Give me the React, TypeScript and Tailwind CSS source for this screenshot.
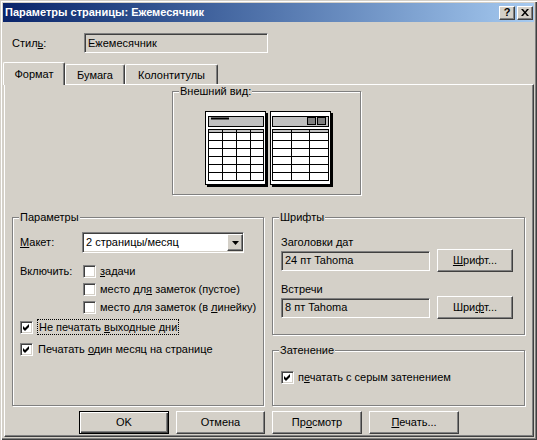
import React from "react";

const raised =
  "bg-[#d4d0c8] border border-t-white border-l-white border-r-[#404040] border-b-[#404040] shadow-[inset_-1px_-1px_0_#808080]";
const sunken =
  "border border-t-[#808080] border-l-[#808080] border-b-white border-r-white shadow-[inset_1px_1px_0_#404040,inset_-1px_-1px_0_#d4d0c8]";
const etched = "relative border border-[#808080] shadow-[inset_1px_1px_0_#fff,1px_1px_0_#fff]";

function Group({ title, className, children }: { title: string; className?: string; children?: React.ReactNode }) {
  return (
    <div className={`${etched} ${className ?? ""}`}>
      <span className="absolute -top-[7px] left-[6px] bg-[#d4d0c8] px-[1px] leading-[13px]">{title}</span>
      {children}
    </div>
  );
}

function Check({ checked }: { checked?: boolean }) {
  return (
    <span className={`flex h-[13px] w-[13px] shrink-0 bg-white ${sunken}`}>
      {checked && (
        <svg width="11" height="11" viewBox="0 0 11 11">
          <polygon points="2,4 4,6 8,2 8,5 4,9 2,7" fill="#000" />
        </svg>
      )}
    </span>
  );
}

function Button({ children, className, isDefault }: { children: React.ReactNode; className?: string; isDefault?: boolean }) {
  if (isDefault) {
    return (
      <div
        className={`flex h-[23px] items-center justify-center border border-black bg-[#d4d0c8] shadow-[inset_1px_1px_0_#fff,inset_-1px_-1px_0_#404040,inset_-2px_-2px_0_#808080] ${className ?? ""}`}
      >
        {children}
      </div>
    );
  }
  return <div className={`flex h-[23px] items-center justify-center ${raised} ${className ?? ""}`}>{children}</div>;
}

function Calendars() {
  const rows = [21, 29, 37, 45, 53, 61, 69];
  return (
    <svg width="130" height="80" viewBox="0 0 130 80">
      {/* left page */}
      <rect x="2" y="2" width="61" height="74" fill="#000" />
      <rect x="0.5" y="0.5" width="60" height="73" fill="#fff" stroke="#000" />
      <rect x="3.5" y="5.5" width="55" height="10" fill="#c0c0c0" stroke="#000" />
      <rect x="6" y="6.5" width="18" height="2" fill="#000" />
      <rect x="3.5" y="18.5" width="55" height="3" fill="#c0c0c0" stroke="#000" />
      {rows.map((y) => (
        <line key={"l" + y} x1="3" x2="59" y1={y + 0.5} y2={y + 0.5} stroke="#000" />
      ))}
      {[3, 17, 31, 45, 58].map((x) => (
        <line key={"lc" + x} x1={x + 0.5} x2={x + 0.5} y1="18" y2="70" stroke="#000" />
      ))}
      {/* right page */}
      <rect x="67" y="2" width="61" height="74" fill="#000" />
      <rect x="65.5" y="0.5" width="60" height="73" fill="#fff" stroke="#000" />
      <rect x="67.5" y="5.5" width="56" height="10" fill="#c0c0c0" stroke="#000" />
      <rect x="102.5" y="6.5" width="8" height="7" fill="#808080" stroke="#000" />
      <rect x="112.5" y="6.5" width="8" height="7" fill="#808080" stroke="#000" />
      <rect x="67.5" y="18.5" width="56" height="3" fill="#c0c0c0" stroke="#000" />
      {rows.map((y) => (
        <line key={"r" + y} x1="67" x2="124" y1={y + 0.5} y2={y + 0.5} stroke="#000" />
      ))}
      {[67, 86, 104, 123].map((x) => (
        <line key={"rc" + x} x1={x + 0.5} x2={x + 0.5} y1="18" y2="70" stroke="#000" />
      ))}
    </svg>
  );
}

export default function App() {
  return (
    <div className="flex h-[440px] w-[537px] flex-col bg-[#d4d0c8] p-[3px] font-['Liberation_Sans',Arial,sans-serif] text-[11px] leading-[13px] text-black shadow-[inset_1px_1px_0_#d4d0c8,inset_2px_2px_0_#fff,inset_-1px_-1px_0_#404040,inset_-2px_-2px_0_#808080]">
      {/* title bar */}
      <div className="flex h-[19px] shrink-0 items-center justify-between bg-linear-to-r from-[#0a246a] to-[#a6caf0] pl-[2px] pr-[1px]">
        <span className="font-bold text-white">Параметры страницы: Ежемесячник</span>
        <div className="flex gap-[2px]">
          <div className={`flex h-[14px] w-[16px] items-center justify-center ${raised}`}>
            <span className="text-[11px] font-bold leading-none">?</span>
          </div>
          <div className={`flex h-[14px] w-[16px] items-center justify-center ${raised}`}>
            <svg width="8" height="7" viewBox="0 0 8 7">
              <path d="M0 0h2l2 2.5L6 0h2L5 3.5 8 7H6L4 4.5 2 7H0l3-3.5z" fill="#000" />
            </svg>
          </div>
        </div>
      </div>

      {/* style row */}
      <div className="mt-[11px] flex h-[20px] shrink-0 items-center">
        <span className="w-[81px] pl-[9px]">
          Стил<u>ь</u>:
        </span>
        <div className={`flex h-[20px] w-[184px] items-center pl-[3px] ${sunken}`}>Ежемесячник</div>
      </div>

      {/* tabs */}
      <div className="mt-[9px] flex h-[22px] shrink-0 items-end pl-[1px]">
        <div className="relative z-10 -mb-px -ml-px flex h-[23px] w-[62px] justify-center rounded-t-[2px] border-t border-l border-r border-t-white border-l-white border-r-[#404040] bg-[#d4d0c8] pt-[5px] shadow-[inset_-1px_0_0_#808080]">
          Формат
        </div>
        <div className="flex h-[20px] w-[60px] justify-center rounded-t-[2px] border-t border-l border-r border-t-white border-l-white border-r-[#404040] pt-[4px] shadow-[inset_-1px_0_0_#808080]">
          Бумага
        </div>
        <div className="flex h-[20px] w-[93px] justify-center rounded-t-[2px] border-t border-l border-r border-t-white border-l-white border-r-[#404040] pt-[4px] shadow-[inset_-1px_0_0_#808080]">
          Колонтитулы
        </div>
      </div>

      {/* panel */}
      <div className="ml-[1px] flex min-h-0 flex-1 flex-col border border-t-white border-l-white border-r-[#404040] border-b-[#404040] shadow-[inset_-1px_-1px_0_#808080]">
        <Group title="Внешний вид:" className="ml-[167px] mt-[6px] h-[104px] w-[189px] shrink-0">
          <div className="pl-[32px] pt-[19px]">
            <Calendars />
          </div>
        </Group>

        <div className="ml-[7px] mt-[22px] flex gap-[8px]">
          <Group title="Параметры" className="h-[189px] w-[252px] pl-[7px] pt-[14px]">
            <div className="flex h-[21px] items-center">
              <span className="w-[62px]">
                <u>М</u>акет:
              </span>
              <div className={`flex h-[21px] w-[162px] items-center justify-between bg-white pl-[3px] ${sunken}`}>
                <span>2 страницы/месяц</span>
                <div className={`flex h-[17px] w-[16px] items-center justify-center ${raised}`}>
                  <svg width="7" height="4" viewBox="0 0 7 4">
                    <path d="M0 0h7L3.5 4z" fill="#000" />
                  </svg>
                </div>
              </div>
            </div>

            <div className="mt-[9px] flex h-[18px] items-center">
              <span className="w-[63px]">Включить:</span>
              <Check />
              <span className="ml-[4px]">
                <u>з</u>адачи
              </span>
            </div>
            <div className="flex h-[18px] items-center pl-[63px]">
              <Check />
              <span className="ml-[4px]">
                место дл<u>я</u> заметок (пустое)
              </span>
            </div>
            <div className="flex h-[18px] items-center pl-[63px]">
              <Check />
              <span className="ml-[4px]">
                место для заметок (в <u>л</u>инейку)
              </span>
            </div>

            <div className="mt-[2px] flex h-[18px] items-center">
              <Check checked />
              <span className="ml-[4px] border border-dotted border-black px-[1px] leading-[14px]">
                Не печатать <u>в</u>ыходные дни
              </span>
            </div>
            <div className="mt-[4px] flex h-[18px] items-center">
              <Check checked />
              <span className="ml-[5px]">
                Печатать <u>о</u>дин месяц на странице
              </span>
            </div>
          </Group>

          <div className="flex w-[253px] flex-col">
            <Group title="Шрифты" className="h-[118px] pl-[8px] pt-[18px]">
              <div className="h-[13px]">Заголовки дат</div>
              <div className="flex h-[23px] items-center gap-[7px]">
                <div className={`flex h-[20px] w-[149px] items-center pl-[3px] ${sunken}`}>24 пт Tahoma</div>
                <Button className="w-[76px]">
                  <span>
                    <u>Ш</u>рифт...
                  </span>
                </Button>
              </div>
              <div className="mt-[11px] h-[13px]">Встречи</div>
              <div className="flex h-[23px] items-center gap-[7px]">
                <div className={`flex h-[20px] w-[149px] items-center pl-[3px] ${sunken}`}>8 пт Tahoma</div>
                <Button className="w-[76px]">
                  <span>
                    Шри<u>ф</u>т...
                  </span>
                </Button>
              </div>
            </Group>

            <Group title="Затенение" className="mt-[15px] h-[56px] pl-[8px] pt-[17px]">
              <div className="flex h-[18px] items-center">
                <Check checked />
                <span className="ml-[4px]">
                  п<u>е</u>чатать с серым затенением
                </span>
              </div>
            </Group>
          </div>
        </div>

        <div className="ml-[74px] mt-[5px] flex gap-[7px]">
          <Button isDefault className="w-[90px]">
            OK
          </Button>
          <Button className="w-[89px]">Отмена</Button>
          <Button className="w-[90px]">
            <span>
              Пр<u>о</u>смотр
            </span>
          </Button>
          <Button className="w-[90px]">
            <span>
              <u>П</u>ечать...
            </span>
          </Button>
        </div>
      </div>
    </div>
  );
}
